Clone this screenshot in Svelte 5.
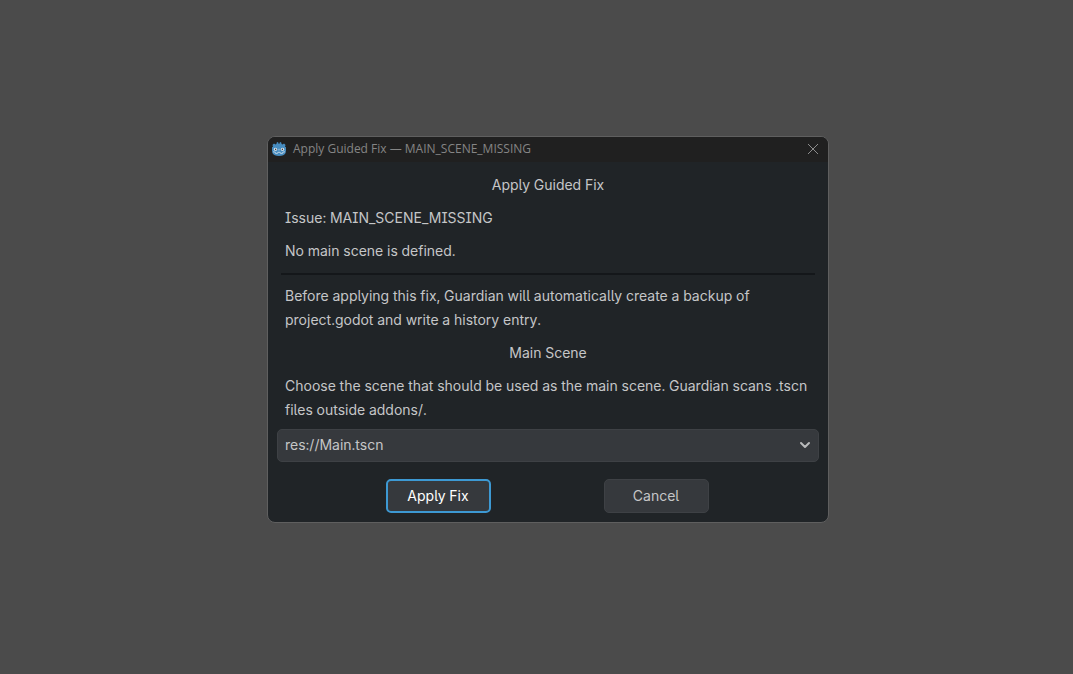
<script>
  let scene = $state('res://Main.tscn');
</script>

<main>
  <div class="dialog" role="dialog" aria-labelledby="window-title">
    <header>
      <svg class="logo" viewBox="0 0 14 14" aria-hidden="true">
        <path fill="#478cbf" d="M5 0 4.4 2 3.4 2.5 2 1.4.4 2.9 1.1 4.4 0 5.2V8.6L.4 11C1.2 13 3.8 14 7 14s5.8-1 6.6-3L14 8.6V5.2l-1.1-.8.7-1.5L12 1.4l-1.4 1.1-1-.5L9 0 7.7.5 7.5 1.8h-1L6.3.5z" />
        <circle cx="3.5" cy="7.3" r="1.6" fill="#f0f4f7" />
        <circle cx="10.5" cy="7.3" r="1.6" fill="#f0f4f7" />
        <circle cx="3.6" cy="7.4" r=".8" fill="#414042" />
        <circle cx="10.4" cy="7.4" r=".8" fill="#414042" />
        <path d="M7 6.8v1.6M1 9.8l2.2.3.3 1.3h2l.3-1.1h2.4l.3 1.1h2l.3-1.3 2.2-.3" fill="none" stroke="#cfe0ec" stroke-width=".8" />
      </svg>
      <span id="window-title" class="title">Apply Guided Fix — MAIN_SCENE_MISSING</span>
      <button class="close" aria-label="Close">
        <svg viewBox="0 0 12 12" aria-hidden="true"><path d="M1 1l10 10M11 1L1 11" fill="none" stroke="#8c8c8c" /></svg>
      </button>
    </header>
    <div class="content">
      <h1>Apply Guided Fix</h1>
      <p>Issue: MAIN_SCENE_MISSING</p>
      <p>No main scene is defined.</p>
      <hr />
      <p>Before applying this fix, Guardian will automatically create a backup of project.godot and write a history entry.</p>
      <h2 id="scene-label">Main Scene</h2>
      <p>Choose the scene that should be used as the main scene. Guardian scans .tscn files outside addons/.</p>
      <div class="picker">
        <select aria-labelledby="scene-label" bind:value={scene}>
          <option>res://Main.tscn</option>
        </select>
        <svg class="arrow" viewBox="0 0 12 12" aria-hidden="true"><path d="M2 4l4 4 4-4" fill="none" stroke="#b9babb" stroke-width="2" stroke-linecap="round" stroke-linejoin="round" /></svg>
      </div>
    </div>
    <footer>
      <button class="action primary">Apply Fix</button>
      <button class="action">Cancel</button>
    </footer>
  </div>
</main>

<style>
  :global(body) {
    margin: 0;
    background: #4b4b4b;
  }
  main {
    box-sizing: border-box;
    min-height: 100vh;
    padding: 0 0 15px 23px;
    display: flex;
    align-items: center;
    justify-content: center;
    font: 14px/24px Inter, sans-serif;
    font-feature-settings: 'ss04', 'cv08', 'tnum';
    color: #c5c6c7;
  }
  .dialog {
    box-sizing: border-box;
    width: 100%;
    max-width: 562px;
    border: 1px solid #5f5f5f;
    border-radius: 8px;
    background: #202427;
    overflow: hidden;
  }
  header {
    box-sizing: border-box;
    display: flex;
    align-items: center;
    height: 25px;
    padding: 0 9px 1px 4px;
    background: #202020;
    color: #858585;
  }
  .logo {
    width: 14px;
    height: 14px;
    margin-right: 7px;
  }
  .title {
    flex: 1;
    font: 12px/24px 'Open Sans', sans-serif;
  }
  button {
    font: inherit;
    font-feature-settings: inherit;
    color: inherit;
  }
  .close {
    display: flex;
    padding: 0;
    border: 0;
    background: none;
  }
  .close svg {
    width: 12px;
    height: 12px;
  }
  .content {
    display: flex;
    flex-direction: column;
    gap: 9px;
    padding: 11px 9px 0;
  }
  h1, h2, p {
    margin: 0;
    padding: 0 8px;
    font-size: 14px;
    font-weight: 400;
  }
  h1, h2 {
    text-align: center;
  }
  hr {
    width: auto;
    align-self: stretch;
    height: 2px;
    margin: 1px 4px 0;
    border: 0;
    background: #14171a;
  }
  .picker {
    display: grid;
    align-items: center;
    margin-top: -2px;
  }
  select {
    grid-area: 1 / 1;
    appearance: none;
    box-sizing: border-box;
    width: 100%;
    height: 33px;
    padding: 0 28px 1px 7px;
    border: 1px solid #3e4145;
    border-radius: 5px;
    background: #36393d;
    color: inherit;
    font: inherit;
    font-feature-settings: inherit;
  }
  .arrow {
    grid-area: 1 / 1;
    justify-self: end;
    width: 12px;
    height: 12px;
    margin: 0 8px 1px 0;
    pointer-events: none;
  }
  footer {
    display: flex;
    justify-content: center;
    gap: 113px;
    padding: 17px 11px 9px 9px;
  }
  .action {
    box-sizing: border-box;
    width: 105px;
    height: 34px;
    padding: 0;
    border: 1px solid #3e4145;
    border-radius: 5px;
    background: #36393d;
  }
  .primary {
    border: 2px solid #3d99d3;
    color: #fff;
  }
</style>
